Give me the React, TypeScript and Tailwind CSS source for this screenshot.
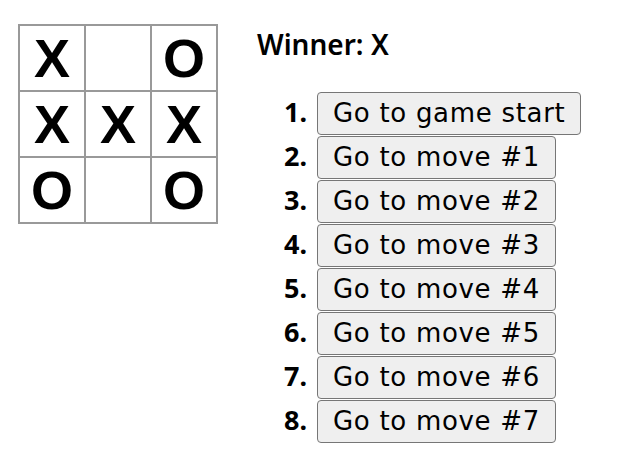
import React from "react";

const squares = ["X", "", "O", "X", "X", "X", "O", "", "O"];
const moves = [
  "Go to game start",
  "Go to move #1",
  "Go to move #2",
  "Go to move #3",
  "Go to move #4",
  "Go to move #5",
  "Go to move #6",
  "Go to move #7",
];

export default function App() {
  return (
    <div className="flex items-start pl-[18px] pt-[24px] bg-white text-black min-h-[474px]">
      <div className="grid grid-cols-3 gap-[2px] border-2 border-[#999] bg-[#999]">
        {squares.map((s, i) => (
          <div
            key={i}
            className="w-[64px] h-[64px] bg-white flex items-center justify-center text-[54px] leading-none font-bold"
            style={{ fontFamily: '"Liberation Sans", Arial, sans-serif' }}
          >
            {s}
          </div>
        ))}
      </div>
      <div className="ml-[39px]">
        <div
          className="mt-[6px] text-[28px] leading-[28px] font-semibold"
          style={{ fontFamily: '"Noto Sans", sans-serif' }}
        >
          Winner: X
        </div>
        <ol className="mt-[34px] list-none p-0 m-0">
          {moves.map((m, i) => (
            <li key={i} className="flex items-baseline h-[44px]">
              <span
                className="w-[50px] text-right text-[27px] font-bold mr-[10px]"
                style={{ fontFamily: '"Noto Sans", sans-serif' }}
              >
                {i + 1}.
              </span>
              <button
                className="h-[43px] px-[15px] border border-[#767676] rounded-[4px] bg-[#efefef] text-[26px] leading-[41px] tracking-[0.7px] whitespace-nowrap"
                style={{ fontFamily: '"DejaVu Sans", sans-serif' }}
              >
                {m}
              </button>
            </li>
          ))}
        </ol>
      </div>
    </div>
  );
}
